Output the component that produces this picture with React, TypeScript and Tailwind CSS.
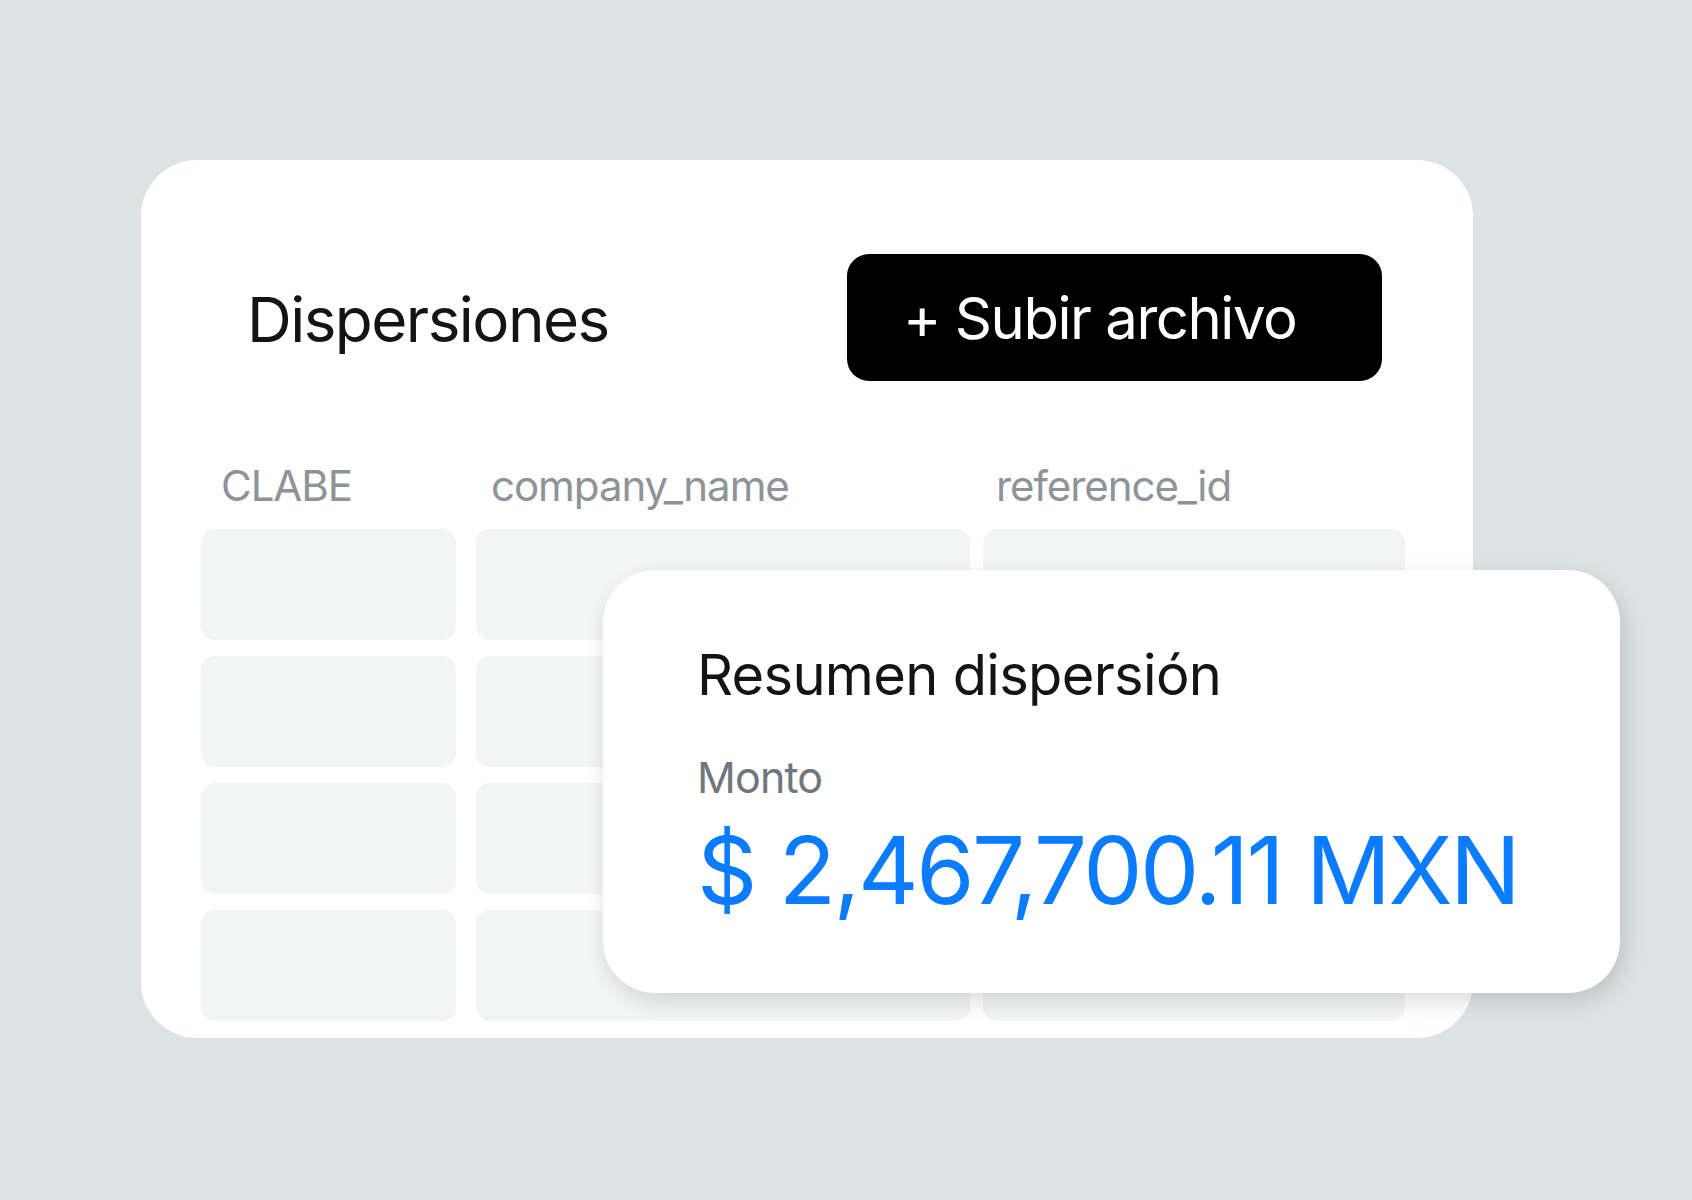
const headers = [
  { label: "CLABE", pad: "pl-[20px]" },
  { label: "company_name", pad: "pl-[15px]" },
  { label: "reference_id", pad: "pl-[6px]" },
]

const rows = [0, 1, 2, 3]

export default function App() {
  return (
    <div className="h-[1200px] w-full overflow-hidden bg-[#dde2e2] pt-[160px] pl-[141px] font-['Inter','Noto_Sans',sans-serif]">
      <div className="relative w-[1332px]">
        {/* Main card */}
        <div className="flex h-[878px] w-[1332px] flex-col overflow-hidden rounded-[56px] bg-white">
          <div className="mt-[94px] flex h-[127px] items-center justify-between pr-[91px] pl-[106px]">
            <h1 className="mt-[4px] text-[62px] leading-none tracking-[-0.025em] text-[#141414]">
              Dispersiones
            </h1>
            <button className="flex h-[127px] w-[535px] items-center rounded-[22px] bg-black pl-[56px] text-[58px] leading-none tracking-[-0.025em] text-white">
              + Subir archivo
            </button>
          </div>

          <div className="mt-[84px] ml-[60px] grid grid-cols-[255px_494px_422px] gap-x-[20px]">
            {headers.map((h) => (
              <div
                key={h.label}
                className={`${h.pad} text-[42px] leading-none tracking-[-0.025em] text-[#8d9399]`}
              >
                {h.label}
              </div>
            ))}
          </div>

          <div className="mt-[22px] ml-[60px] flex flex-col gap-[16px]">
            {rows.map((r) => (
              <div key={r} className="flex">
                <div className="h-[111px] w-[255px] rounded-[14px] bg-[#f3f5f5]" />
                <div className="ml-[20px] h-[111px] w-[494px] rounded-[14px] bg-[#f3f5f5]" />
                <div className="ml-[13px] h-[111px] w-[422px] rounded-[14px] bg-[#f3f5f5]" />
              </div>
            ))}
          </div>
        </div>

        {/* Summary card */}
        <div className="absolute top-[410px] left-[462px] flex h-[423px] w-[1017px] flex-col rounded-[52px] bg-white pt-[77px] pl-[94px] shadow-[4px_8px_22px_rgba(0,0,0,0.14)]">
          <div className="text-[56px] leading-none tracking-[-0.012em] text-[#141414]">
            Resumen dispersión
          </div>
          <div className="mt-[53px] text-[43px] leading-none tracking-[-0.02em] text-[#6f767d]">
            Monto
          </div>
          <div className="mt-[24px] text-[94px] leading-none tracking-[-0.027em] text-[#0b7bff]">
            $ 2,467,700.11 MXN
          </div>
        </div>
      </div>
    </div>
  )
}
